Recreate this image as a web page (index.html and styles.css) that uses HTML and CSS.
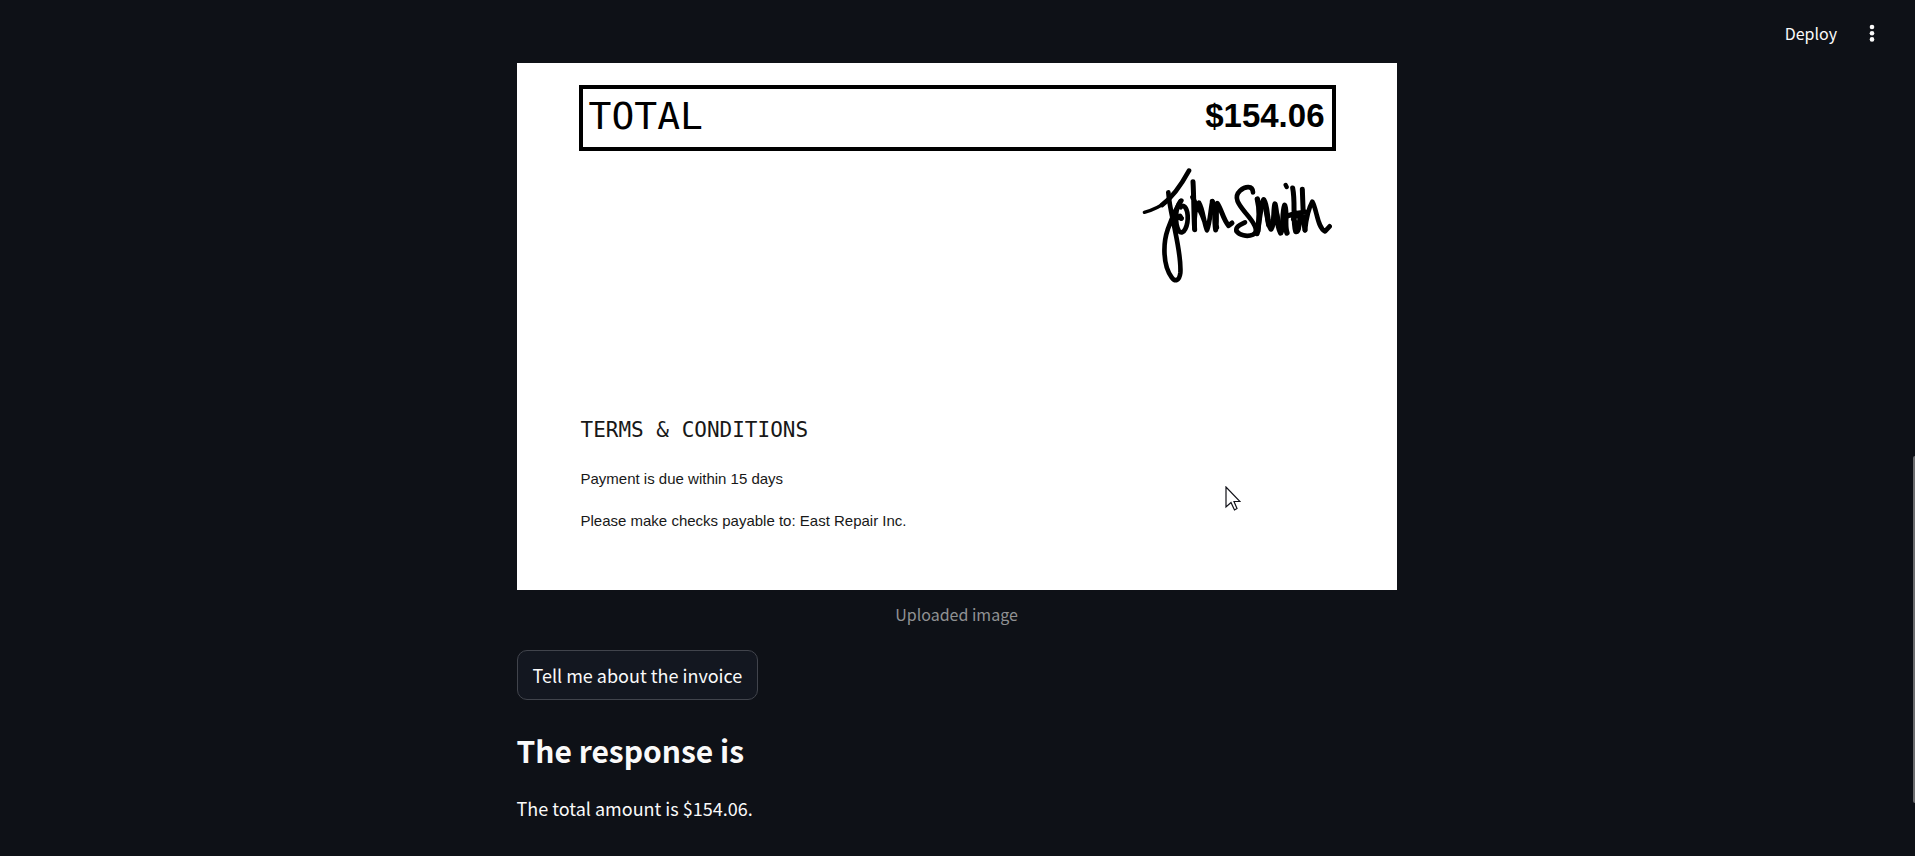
FILE: index.html
```html
<!DOCTYPE html>
<html lang="en">
<head>
<meta charset="utf-8">
<meta name="viewport" content="width=device-width, initial-scale=1">
<title>Invoice</title>
<link rel="stylesheet" href="styles.css">
</head>
<body>
<header class="toolbar">
  <button class="deploy" type="button">Deploy</button>
  <button class="menu" type="button" aria-label="Main menu">
    <svg width="6" height="20" viewBox="0 0 6 20" fill="currentColor" aria-hidden="true"><circle cx="3" cy="4" r="2.3"/><circle cx="3" cy="10.2" r="2.3"/><circle cx="3" cy="16.4" r="2.3"/></svg>
  </button>
</header>
<main class="content">
  <figure class="upload">
    <div class="invoice">
      <div class="total"><span class="total-label">TOTAL</span><strong class="total-value">$154.06</strong></div>
      <svg class="signature" viewBox="39 39 570 345" role="img" aria-label="Signature of John Smith">
        <g fill="none" stroke="#000" stroke-linecap="round" stroke-linejoin="round">
          <path stroke-width="10" d="M46 172 C75 164 99 151 119 136"/>
          <path stroke-width="14" d="M99 150 C130 128 156 91 180 47"/>
          <path stroke-width="14" d="M118 112 C121 151 130 186 137 221 C145 260 157 315 154 354 C151 377 139 382 128 367 C101 331 102 264 116 224 C128 191 139 160 157 137"/>
          <path stroke-width="14" d="M154 139 C138 160 137 207 150 229 C164 242 178 212 176 181 C174 157 162 146 155 157 M139 191 L153 187 L158 190"/>
          <path stroke-width="15" d="M153 183 L156 190 M192 80 C195 130 194 179 197 224 M191 127 L199 145"/>
          <path stroke-width="14" d="M197 222 C195 188 200 156 210 143 C223 164 224 203 234 226 C244 198 244 166 250 139 M202 151 C218 169 226 194 234 225"/>
          <path stroke-width="15" d="M250 139 C261 166 255 200 260 225 C265 196 259 171 265 145 C278 164 283 195 299 212 L309 204 M253 156 L263 217"/>
          <path stroke-width="14" d="M372 112 C371 91 349 93 333 107 C310 128 333 153 350 174 C373 201 393 229 372 239 C353 247 331 240 322 228 C320 215 332 210 348 202"/>
          <path stroke-width="16" d="M385 132 C393 164 391 201 384 236 C391 206 391 165 404 134 C419 158 411 200 426 222 C439 202 432 169 438 147 C446 181 442 210 455 234 C466 212 458 178 467 151 C476 178 465 209 474 234"/>
          <path stroke-width="13" d="M394 154 L388 229 M406 142 L418 211 M444 176 L455 226 M470 90 L473 96"/>
          <path stroke-width="15" d="M491 99 C500 143 490 194 500 230 C510 234 509 210 513 190 M520 103 C522 152 522 196 528 225 M472 184 C494 176 515 172 534 172 M491 182 L524 183"/>
          <path stroke-width="14" d="M528 226 C532 188 540 158 550 140 C564 164 565 218 588 229 L602 214 M493 193 L509 219"/>
        </g>
      </svg>
      <section class="terms">
        <h3 class="terms-title">TERMS &amp; CONDITIONS</h3>
        <p class="terms-line">Payment is due within 15 days</p>
        <p class="terms-line">Please make checks payable to: East Repair Inc.</p>
      </section>
      <svg class="pointer" width="16" height="26" viewBox="0 0 16 26" aria-hidden="true"><path d="M1 1V21L6 16.5L9.5 24L12 22.5L9 15.5H15Z" fill="#fff" stroke="#111118" stroke-width="1.2"/></svg>
    </div>
    <figcaption class="caption">Uploaded image</figcaption>
  </figure>
  <button class="ask" type="button">Tell me about the invoice</button>
  <h1 class="heading">The response is</h1>
  <p class="response">The total amount is $154.06.</p>
</main>
<div class="scroll-thumb" aria-hidden="true"></div>
</body>
</html>
```
FILE: styles.css
```css
* { box-sizing: border-box; }
body {
  margin: 0;
  padding-right: 2px;
  min-height: 100vh;
  background: #0e1117;
  color: #fafafa;
  font-family: "Noto Sans CJK SC", "Noto Sans", sans-serif;
  font-size: 18px;
  line-height: 32px;
}
button {
  color: inherit;
  font-family: inherit;
  cursor: pointer;
}
.toolbar {
  display: flex;
  justify-content: flex-end;
  align-items: center;
  gap: 32px;
  padding: 2px 38px 0 0;
  height: 63px;
}
.deploy, .menu {
  display: flex;
  padding: 0;
  border: 0;
  background: none;
  font-size: 16px;
}
.content {
  max-width: 880px;
  margin: 0 auto;
}
.upload { margin: 0 0 24px; }
.invoice {
  position: relative;
  display: flex;
  flex-direction: column;
  padding: 22px 61px 58px 62px;
  background: #fff;
  color: #000;
}
.total {
  display: flex;
  justify-content: space-between;
  align-items: center;
  padding: 0 7px 4px 6px;
  border: 4px solid #000;
  height: 66px;
}
.total-label {
  font-family: "DejaVu Sans Mono", monospace;
  font-size: 38px;
}
.total-value {
  font-family: "Liberation Sans Narrow", "Liberation Sans", sans-serif;
  font-size: 33px;
}
.signature {
  align-self: flex-end;
  width: 190px;
  height: 115px;
  margin: 17px 4px 0 0;
}
.terms {
  margin-top: 133px;
  padding-left: 2px;
  color: #181818;
}
.terms-title {
  margin: 0 0 24px;
  font-family: "DejaVu Sans Mono", monospace;
  font-size: 21px;
  font-weight: 400;
  line-height: 28px;
}
.terms-line {
  margin: 0 0 20px;
  font-family: "Liberation Sans", sans-serif;
  font-size: 15px;
  line-height: 22px;
}
.terms-line:last-child { margin: 0; }
.pointer {
  position: absolute;
  left: 708px;
  top: 423px;
}
.caption {
  margin-top: 12px;
  color: #909193;
  font-size: 16px;
  line-height: 24px;
  text-align: center;
}
.ask {
  display: block;
  padding: 8px 15px;
  border: 1px solid #41444c;
  border-radius: 10px;
  background: #131720;
  font-size: 18px;
  line-height: 32px;
}
.heading {
  margin: 28px 0 20px;
  font-size: 30px;
  font-weight: 700;
  line-height: 44px;
}
.response { margin: 0; }
.scroll-thumb {
  position: fixed;
  right: 0;
  top: 456px;
  width: 2px;
  height: 347px;
  border-radius: 2px 0 0 2px;
  background: #6b6c6f;
}
```
